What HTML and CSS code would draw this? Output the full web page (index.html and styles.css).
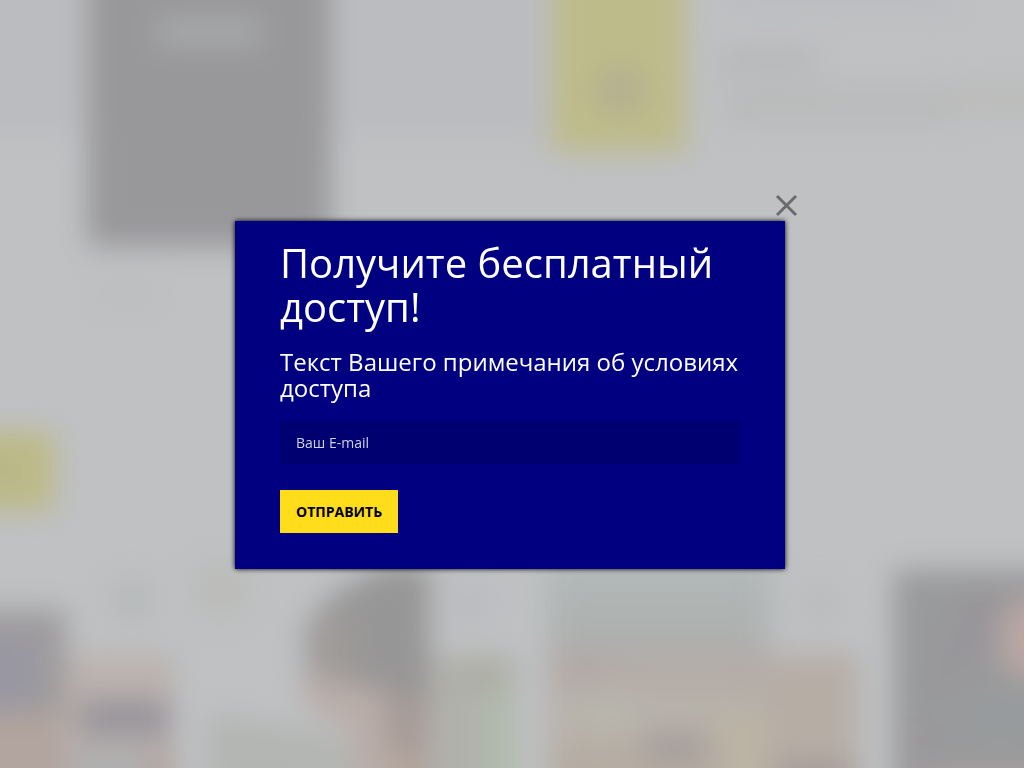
FILE: index.html
```html
<!DOCTYPE html>
<html lang="ru">
<head>
    <meta charset="UTF-8">
    <meta name="viewport" content="width=device-width, initial-scale=1.0">
    <title>Получите бесплатный доступ!</title>
    <link rel="stylesheet" href="styles.css">
</head>
<body>
    <svg class="backdrop" viewBox="0 0 1024 768" preserveAspectRatio="xMidYMid slice" aria-hidden="true">
        <defs>
            <filter id="soft" filterUnits="userSpaceOnUse" x="-80" y="-80" width="1184" height="928" color-interpolation-filters="sRGB">
                <feGaussianBlur stdDeviation="14"/>
            </filter>
            <linearGradient id="photo" x1="0" y1="0" x2="0" y2="1">
                <stop offset="0" stop-color="#b3b8b8"/>
                <stop offset="0.25" stop-color="#adb1b0"/>
                <stop offset="0.38" stop-color="#b4aca7"/>
                <stop offset="0.55" stop-color="#b7b3ab"/>
                <stop offset="0.75" stop-color="#b5aaa0"/>
                <stop offset="1" stop-color="#b5aaa0"/>
            </linearGradient>
        </defs>
        <g filter="url(#soft)">
            <!-- top banner -->
            <rect x="-80" y="-80" width="630" height="216" fill="#bbbcbf"/>
            <rect x="88" y="-80" width="242" height="326" fill="#98979a"/>
            <rect x="156" y="16" width="106" height="32" fill="#a6a8a8"/>
            <rect x="552" y="-80" width="134" height="232" fill="#bebb8b"/>
            <circle cx="620" cy="90" r="28" fill="#b5b18f"/>
            <rect x="720" y="48" width="96" height="26" fill="#b6b7b9"/>
            <rect x="722" y="-20" width="230" height="28" fill="#bbbdbf"/>
            <rect x="724" y="86" width="236" height="38" fill="#b9baba"/>
            <rect x="950" y="84" width="154" height="30" fill="#bcbcba"/>
            <rect x="100" y="284" width="50" height="20" fill="#bcbcbd"/>
            <!-- side button -->
            <rect x="-80" y="432" width="134" height="78" fill="#bdba86"/>
            <circle cx="0" cy="471" r="16" fill="#b5b38b"/>
            <!-- small icons over the cards -->
            <circle cx="132" cy="600" r="22" fill="#b6b8b9"/>
            <circle cx="220" cy="590" r="30" fill="#bbbcb9"/>
            <circle cx="470" cy="602" r="24" fill="#bbbcbf"/>
            <circle cx="820" cy="604" r="22" fill="#bbbcbd"/>
            <!-- first card -->
            <rect x="-80" y="610" width="146" height="240" fill="#9d9b9d"/>
            <rect x="-80" y="640" width="110" height="66" fill="#9897a2"/>
            <rect x="-80" y="712" width="148" height="136" fill="#b2a49e"/>
            <rect x="66" y="655" width="108" height="190" fill="#bab2ae"/>
            <rect x="80" y="700" width="90" height="36" fill="#98949a"/>
            <rect x="70" y="746" width="80" height="100" fill="#b0afaf"/>
            <rect x="150" y="746" width="24" height="100" fill="#b1a39e"/>
            <!-- portrait -->
            <path d="M208 714l110 16 50 30 20 88H210z" fill="#b3b5b2"/>
            <path d="M304 672l60-10 66 10v176h-58l-28-120-44-28z" fill="#b9ada8"/>
            <path d="M382 682h46v166h-34z" fill="#a69b97"/>
            <path d="M382 566h48v132l-46-8-76-16-4-44 22-30z" fill="#979696"/>
            <path d="M308 622l40-10 10 62-50 2z" fill="#9f9b99"/>
            <path d="M386 750h36v98h-30z" fill="#b4a59c"/>
            <rect x="430" y="656" width="86" height="190" fill="#b1b1ac"/>
            <rect x="458" y="658" width="48" height="28" fill="#acada2"/>
            <rect x="482" y="690" width="34" height="156" fill="#b0b9ac"/>
            <!-- wide photo -->
            <rect x="548" y="560" width="222" height="288" fill="url(#photo)"/>
            <rect x="560" y="656" width="50" height="24" fill="#b1a8a6"/>
            <rect x="768" y="654" width="90" height="194" fill="#b6ada5"/>
            <rect x="580" y="696" width="56" height="34" fill="#b8b6ad"/>
            <rect x="644" y="732" width="62" height="30" fill="#a69e9b"/>
            <rect x="718" y="710" width="50" height="138" fill="#bbb3a4"/>
            <rect x="776" y="762" width="78" height="86" fill="#a69a98"/>
            <!-- dark card on the right -->
            <rect x="894" y="570" width="210" height="278" fill="#999a9b"/>
            <path d="M966 590h50l-40 70-50 36z" fill="#98959a"/>
            <path d="M1000 612l24-14h80v80h-88l-16-20z" fill="#b9a7a3"/>
            <rect x="900" y="724" width="32" height="40" fill="#9a979b"/>
            <circle cx="1000" cy="714" r="28" fill="#989b9d"/>
            <path d="M925 768h179v80H910z" fill="#a59f9f"/>
        </g>
    </svg>

    <div class="overlay">
        <div class="modal" role="dialog" aria-labelledby="modalTitle">
            <button class="modal-close" type="button" aria-label="Закрыть">
                <svg class="close-icon" viewBox="0 0 22 22" aria-hidden="true">
                    <path d="M1 2l19 19M20 2L1 21"/>
                </svg>
            </button>
            <h1 class="modal-title" id="modalTitle">Получите бесплатный доступ!</h1>
            <p class="modal-text">Текст Вашего примечания об условиях доступа</p>
            <form class="modal-form">
                <input class="email-input" type="email" name="email" placeholder="Ваш E-mail" aria-label="Ваш E-mail">
                <button class="submit-button" type="submit">ОТПРАВИТЬ</button>
            </form>
        </div>
    </div>
</body>
</html>
```
FILE: styles.css
```css
* {
    box-sizing: border-box;
}

body {
    margin: 0;
    font-family: "Open Sans", sans-serif;
    background-color: #bfc1c3;
}

.backdrop {
    position: fixed;
    top: 0;
    left: 0;
    width: 100%;
    height: 100%;
}

.overlay {
    position: relative;
    display: flex;
    justify-content: center;
    align-items: center;
    min-height: 100vh;
    padding: 22px 4px 0 0;
}

.modal {
    position: relative;
    width: 100%;
    max-width: 550px;
    padding: 20px 45px 36px;
    background-color: #000080;
    color: #fff;
    box-shadow: 0 0 5px #000;
}

.modal-close {
    position: absolute;
    top: -27px;
    right: -13px;
    padding: 0;
    border: none;
    background: none;
    cursor: pointer;
}

.close-icon {
    display: block;
    width: 22px;
    height: 22px;
    overflow: visible;
    fill: none;
    stroke: #6b6b6c;
    stroke-width: 3;
}

.modal-title {
    margin: 0 0 20px;
    font-size: 40px;
    font-weight: 400;
    line-height: 44px;
}

.modal-text {
    margin: 0 0 20px;
    font-size: 24px;
    line-height: 26px;
}

.modal-form {
    display: flex;
    flex-direction: column;
    align-items: flex-start;
    gap: 26px;
}

.email-input,
.submit-button {
    height: 43px;
    padding: 0 16px;
    border: none;
    border-radius: 0;
    font-family: inherit;
    font-size: 14px;
}

.email-input {
    width: 100%;
    background-color: #000070;
    color: #fff;
}

.email-input::placeholder {
    color: #d0d0e6;
    opacity: 1;
}

.submit-button {
    background-color: #ffdd1b;
    color: #000;
    font-weight: 700;
    cursor: pointer;
}
```
